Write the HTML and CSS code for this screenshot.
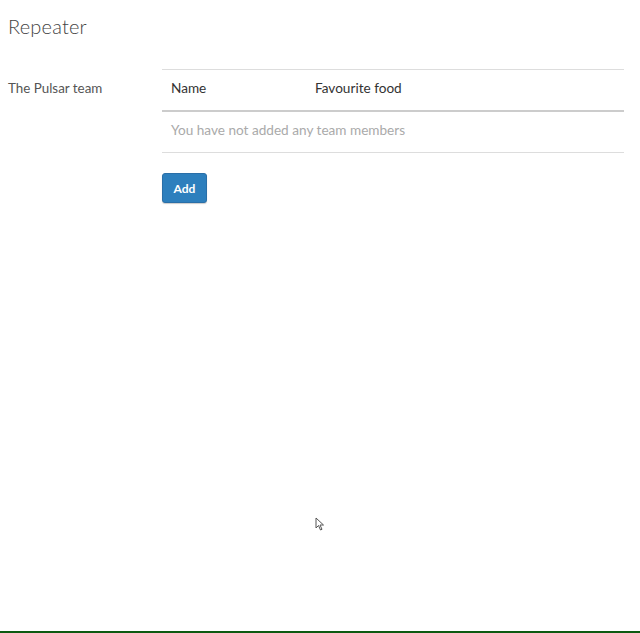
FILE: index.html
```html
<!DOCTYPE html>
<html>
<head>
<meta charset="utf-8">
<link rel="stylesheet" href="styles.css">
</head>
<body>
<div class="page">
  <h1 class="title">Repeater</h1>
  <div class="field">
    <div class="label">The Pulsar team</div>
    <div class="control">
      <table class="repeater">
        <thead>
          <tr><th class="col-name">Name</th><th>Favourite food</th></tr>
        </thead>
        <tbody>
          <tr><td colspan="2" class="empty">You have not added any team members</td></tr>
        </tbody>
      </table>
      <button class="btn">Add</button>
    </div>
  </div>
  <svg class="cursor" width="10" height="14" viewBox="0 0 10 14"><path d="M1 1 L1 11 L3.5 8.5 L5.5 13 L7 12.3 L5 8 L8.5 8 Z" fill="#fff" stroke="#555" stroke-width="1"/></svg>
</div>
</body>
</html>
```
FILE: styles.css
```css
html, body { margin: 0; padding: 0; background: #fff; }
body { font-family: "Lato", "Open Sans", sans-serif; color: #333; }
.page {
  position: relative;
  box-sizing: border-box;
  min-height: 100vh;
  padding: 14px 16px 0 8px;
  border-bottom: 2px solid #0d5a12;
}
.title {
  margin: 0;
  font-size: 20px;
  font-weight: 300;
  color: #444;
  letter-spacing: 0.2px;
}
.field { display: flex; margin-top: 31px; }
.label { width: 154px; font-size: 13.4px; color: #555; padding-top: 11px; }
.control { flex: 1; }
.repeater { width: 100%; border-collapse: collapse; font-size: 13.6px; }
.repeater thead tr { border-top: 1px solid #ddd; border-bottom: 2px solid #ccc; }
.repeater th { text-align: left; font-weight: 400; color: #333; height: 36px; padding: 0 0 4px 9px; }
.repeater th.col-name { width: 135px; }
.repeater tbody tr { border-bottom: 1px solid #ddd; }
.empty { height: 36px; padding: 0 0 4px 9px; color: #aaa; }
.btn {
  display: block;
  margin-top: 20px;
  width: 45px; height: 30px;
  background: #2d7fbd;
  border: 1px solid #2a6fa8;
  border-radius: 3px;
  color: #fff;
  font-family: "Lato", sans-serif;
  font-weight: 700;
  font-size: 12px;
  padding: 0;
  box-shadow: 0 1px 1px rgba(0,0,0,0.2);
}
.cursor { position: absolute; left: 315px; top: 517px; }
```
